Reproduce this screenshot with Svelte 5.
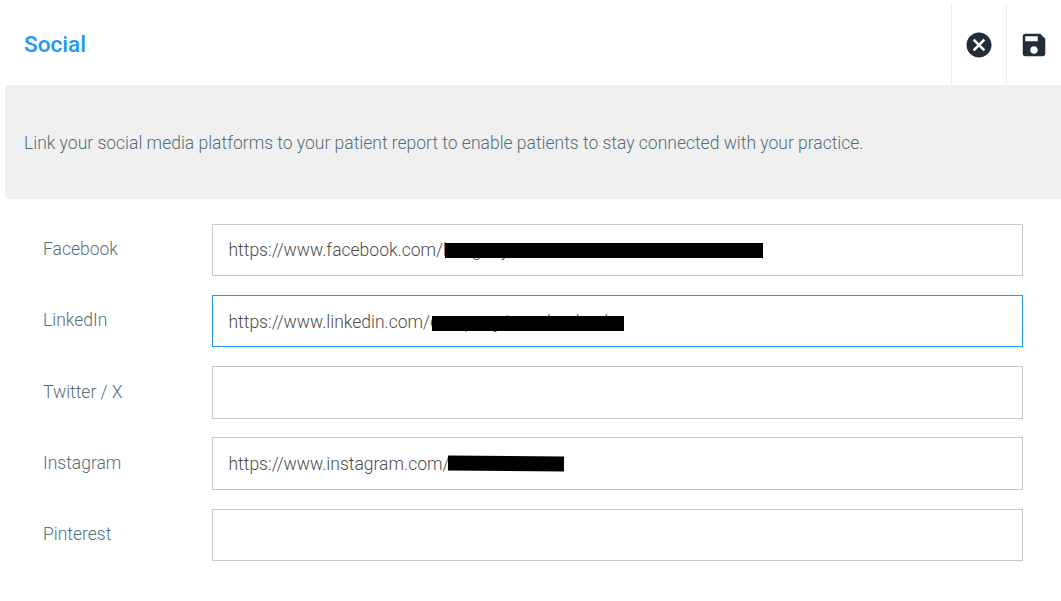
<script>
    // filler is the text under the bar, start and top place the bar in the field
    let fields = $state([
        { label: "Facebook", value: "https://www.facebook.com/", filler: "hnngnny", start: 232, top: 18, width: 318 },
        { label: "LinkedIn", value: "https://www.linkedin.com/", filler: "company/nnnnhnnhnnh", start: 219, top: 20, width: 192, active: true },
        { label: "Twitter / X", value: "" },
        { label: "Instagram", value: "https://www.instagram.com/", filler: "nnnnnn_", start: 235, top: 17.5, width: 116, tilt: 0.4 },
        { label: "Pinterest", value: "" },
    ]);
</script>

<style>
:global(body) {
    background: white;
}

main {
    font-family: Roboto, sans-serif;
    font-weight: 300;
    font-size: 17.5px;
    color: #546e7a;
    padding: 4px 0 0 5px;
}

header {
    display: flex;
    height: 81px;
}

h1 {
    flex: 1;
    margin: 0;
    padding-left: 19px;
    font-size: 22.6px;
    font-weight: 500;
    line-height: 81px;
    color: #2196f3;
}

button {
    width: 55px;
    padding: 0;
    border: 0;
    border-left: 1px solid #eeeeee;
    background: white;
    display: flex;
    align-items: center;
    justify-content: center;
}

svg {
    width: 30px;
    height: 30px;
    fill: #222d38;
}

.intro {
    margin: 0;
    height: 114px;
    line-height: 116px;
    padding-left: 19px;
    background: #f0f0f0;
}

form {
    display: grid;
    gap: 18.8px;
    padding: 24.8px 38px 0;
}

.row {
    display: grid;
    grid-template-columns: 169px 1fr;
    height: 52.4px;
}

label {
    padding-top: 0.4px;
    line-height: 50px;
}

.field {
    position: relative;
    display: flex;
    align-items: center;
    border: 1px solid #c8c8c8;
    padding: 0.8px 0 0 15.5px;
    color: #4c4c4c;
}

.active {
    border-color: #2196f3;
}

.redacted {
    position: absolute;
    height: 15px;
    background: black;
}
</style>

<main>
<header>
    <h1>Social</h1>
    <button aria-label="Close">
        <svg viewBox="0 0 24 24"><path d="M12 2C6.47 2 2 6.47 2 12s4.47 10 10 10 10-4.47 10-10S17.53 2 12 2zm5 13.59L15.59 17 12 13.41 8.41 17 7 15.59 10.59 12 7 8.41 8.41 7 12 10.59 15.59 7 17 8.41 13.41 12 17 15.59z"/></svg>
    </button>
    <button aria-label="Save">
        <svg viewBox="0 0 24 24"><path d="M17 3H5c-1.11 0-2 .9-2 2v14c0 1.1.89 2 2 2h14c1.1 0 2-.9 2-2V7l-4-4zm-5 16c-1.66 0-3-1.34-3-3s1.34-3 3-3 3 1.34 3 3-1.34 3-3 3zm3-10H5V5h10v4z"/></svg>
    </button>
</header>

<p class="intro">Link your social media platforms to your patient report to enable patients to stay connected with your practice.</p>

<form>
{#each fields as field}
<div class="row">
    <label for={field.label}>{field.label}</label>
    <div class="field" class:active={field.active} id={field.label}>
        <span>{field.value}{field.filler ?? ""}</span>
        {#if field.width}
        <span class="redacted" style="left: {field.start}px; top: {field.top}px; width: {field.width}px; transform: rotate({field.tilt ?? 0}deg)"></span>
        {/if}
    </div>
</div>
{/each}
</form>
</main>
